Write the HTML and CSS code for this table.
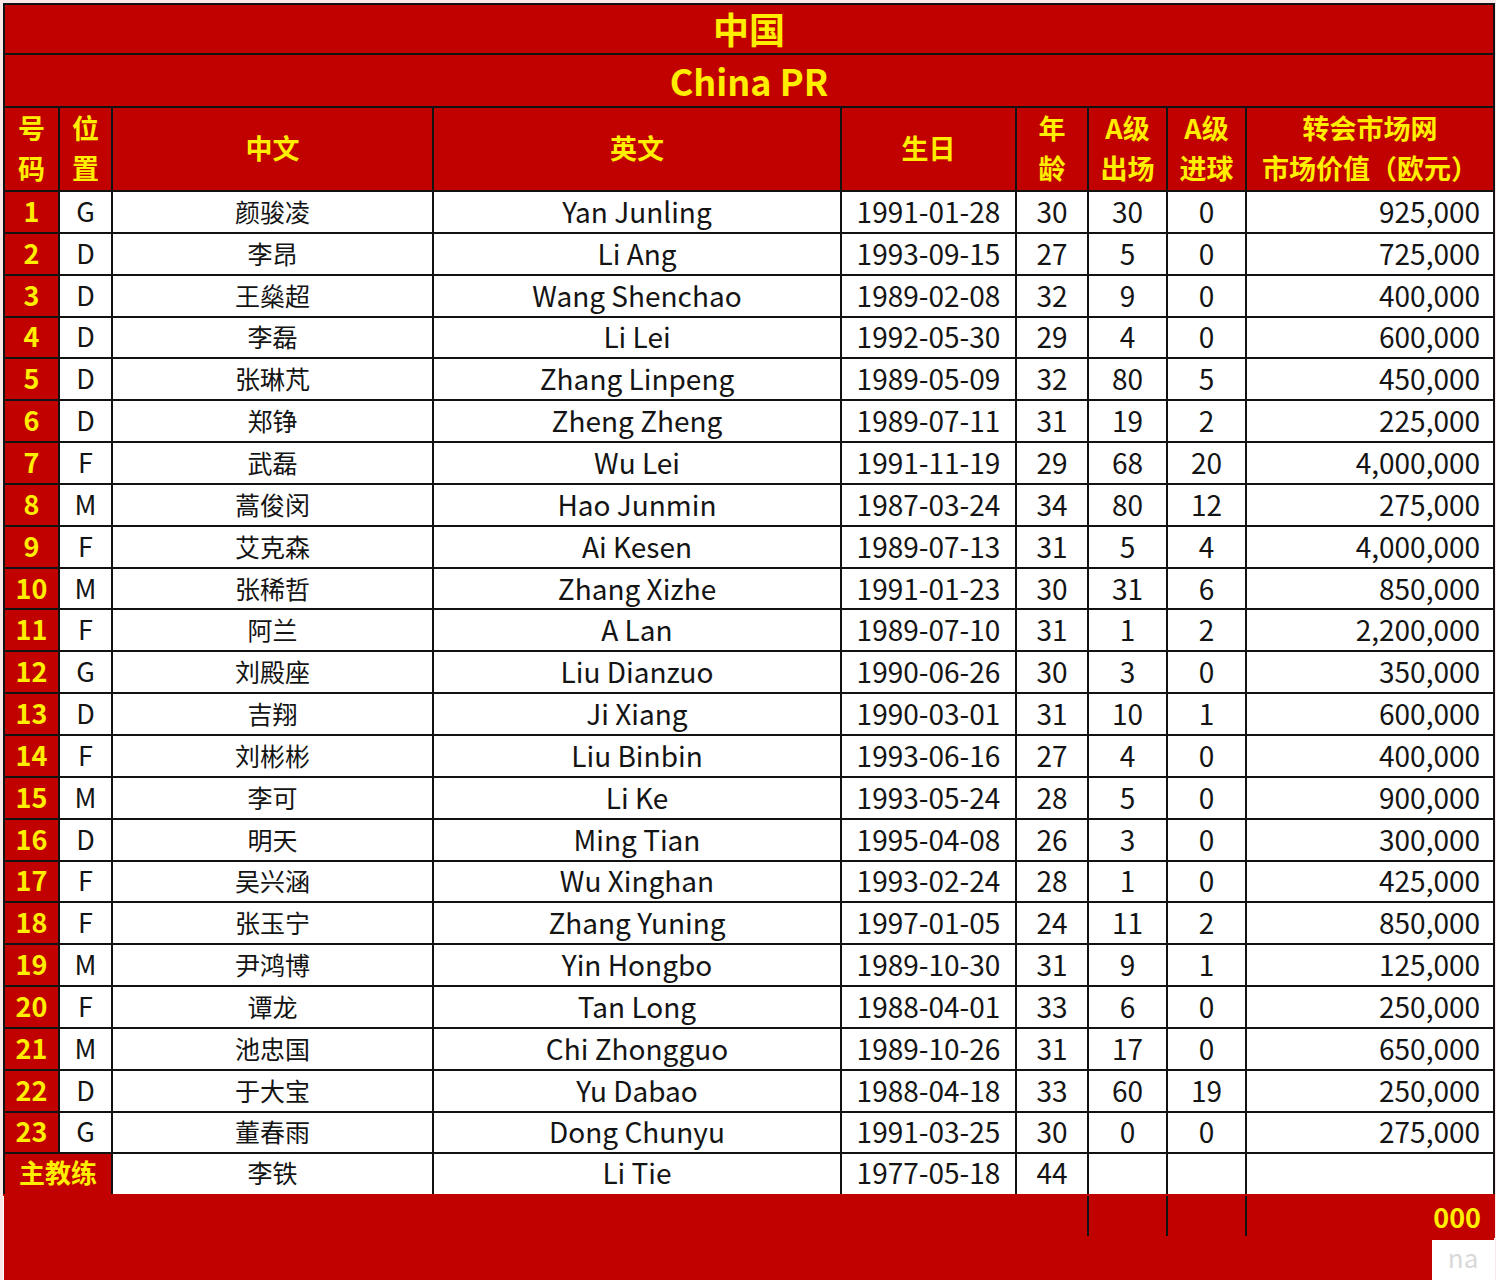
FILE: index.html
```html
<!DOCTYPE html>
<html lang="zh">
<head>
<meta charset="utf-8">
<title>中国 China PR</title>
<link rel="stylesheet" href="styles.css">
</head>
<body>
<table class="sheet">
<colgroup>
<col class="c-no"><col class="c-pos"><col class="c-cn"><col class="c-en"><col class="c-dob"><col class="c-age"><col class="c-caps"><col class="c-goals"><col class="c-val">
</colgroup>
<tr class="title t1"><td colspan="9">中国</td></tr>
<tr class="title t2"><td colspan="9">China PR</td></tr>
<tr class="head">
<td>号<br>码</td><td>位<br>置</td><td>中文</td><td>英文</td><td>生日</td><td>年<br>龄</td><td>A级<br>出场</td><td>A级<br>进球</td><td>转会市场网<br>市场价值（欧元）</td>
</tr>
<tr class="row"><td class="no">1</td><td class="pos">G</td><td class="cn">颜骏凌</td><td class="en">Yan Junling</td><td class="num">1991-01-28</td><td class="num">30</td><td class="num">30</td><td class="num">0</td><td class="val">925,000</td></tr>
<tr class="row"><td class="no">2</td><td class="pos">D</td><td class="cn">李昂</td><td class="en">Li Ang</td><td class="num">1993-09-15</td><td class="num">27</td><td class="num">5</td><td class="num">0</td><td class="val">725,000</td></tr>
<tr class="row"><td class="no">3</td><td class="pos">D</td><td class="cn">王燊超</td><td class="en">Wang Shenchao</td><td class="num">1989-02-08</td><td class="num">32</td><td class="num">9</td><td class="num">0</td><td class="val">400,000</td></tr>
<tr class="row"><td class="no">4</td><td class="pos">D</td><td class="cn">李磊</td><td class="en">Li Lei</td><td class="num">1992-05-30</td><td class="num">29</td><td class="num">4</td><td class="num">0</td><td class="val">600,000</td></tr>
<tr class="row"><td class="no">5</td><td class="pos">D</td><td class="cn">张琳芃</td><td class="en">Zhang Linpeng</td><td class="num">1989-05-09</td><td class="num">32</td><td class="num">80</td><td class="num">5</td><td class="val">450,000</td></tr>
<tr class="row"><td class="no">6</td><td class="pos">D</td><td class="cn">郑铮</td><td class="en">Zheng Zheng</td><td class="num">1989-07-11</td><td class="num">31</td><td class="num">19</td><td class="num">2</td><td class="val">225,000</td></tr>
<tr class="row"><td class="no">7</td><td class="pos">F</td><td class="cn">武磊</td><td class="en">Wu Lei</td><td class="num">1991-11-19</td><td class="num">29</td><td class="num">68</td><td class="num">20</td><td class="val">4,000,000</td></tr>
<tr class="row"><td class="no">8</td><td class="pos">M</td><td class="cn">蒿俊闵</td><td class="en">Hao Junmin</td><td class="num">1987-03-24</td><td class="num">34</td><td class="num">80</td><td class="num">12</td><td class="val">275,000</td></tr>
<tr class="row"><td class="no">9</td><td class="pos">F</td><td class="cn">艾克森</td><td class="en">Ai Kesen</td><td class="num">1989-07-13</td><td class="num">31</td><td class="num">5</td><td class="num">4</td><td class="val">4,000,000</td></tr>
<tr class="row"><td class="no">10</td><td class="pos">M</td><td class="cn">张稀哲</td><td class="en">Zhang Xizhe</td><td class="num">1991-01-23</td><td class="num">30</td><td class="num">31</td><td class="num">6</td><td class="val">850,000</td></tr>
<tr class="row"><td class="no">11</td><td class="pos">F</td><td class="cn">阿兰</td><td class="en">A Lan</td><td class="num">1989-07-10</td><td class="num">31</td><td class="num">1</td><td class="num">2</td><td class="val">2,200,000</td></tr>
<tr class="row"><td class="no">12</td><td class="pos">G</td><td class="cn">刘殿座</td><td class="en">Liu Dianzuo</td><td class="num">1990-06-26</td><td class="num">30</td><td class="num">3</td><td class="num">0</td><td class="val">350,000</td></tr>
<tr class="row"><td class="no">13</td><td class="pos">D</td><td class="cn">吉翔</td><td class="en">Ji Xiang</td><td class="num">1990-03-01</td><td class="num">31</td><td class="num">10</td><td class="num">1</td><td class="val">600,000</td></tr>
<tr class="row"><td class="no">14</td><td class="pos">F</td><td class="cn">刘彬彬</td><td class="en">Liu Binbin</td><td class="num">1993-06-16</td><td class="num">27</td><td class="num">4</td><td class="num">0</td><td class="val">400,000</td></tr>
<tr class="row"><td class="no">15</td><td class="pos">M</td><td class="cn">李可</td><td class="en">Li Ke</td><td class="num">1993-05-24</td><td class="num">28</td><td class="num">5</td><td class="num">0</td><td class="val">900,000</td></tr>
<tr class="row"><td class="no">16</td><td class="pos">D</td><td class="cn">明天</td><td class="en">Ming Tian</td><td class="num">1995-04-08</td><td class="num">26</td><td class="num">3</td><td class="num">0</td><td class="val">300,000</td></tr>
<tr class="row"><td class="no">17</td><td class="pos">F</td><td class="cn">吴兴涵</td><td class="en">Wu Xinghan</td><td class="num">1993-02-24</td><td class="num">28</td><td class="num">1</td><td class="num">0</td><td class="val">425,000</td></tr>
<tr class="row"><td class="no">18</td><td class="pos">F</td><td class="cn">张玉宁</td><td class="en">Zhang Yuning</td><td class="num">1997-01-05</td><td class="num">24</td><td class="num">11</td><td class="num">2</td><td class="val">850,000</td></tr>
<tr class="row"><td class="no">19</td><td class="pos">M</td><td class="cn">尹鸿博</td><td class="en">Yin Hongbo</td><td class="num">1989-10-30</td><td class="num">31</td><td class="num">9</td><td class="num">1</td><td class="val">125,000</td></tr>
<tr class="row"><td class="no">20</td><td class="pos">F</td><td class="cn">谭龙</td><td class="en">Tan Long</td><td class="num">1988-04-01</td><td class="num">33</td><td class="num">6</td><td class="num">0</td><td class="val">250,000</td></tr>
<tr class="row"><td class="no">21</td><td class="pos">M</td><td class="cn">池忠国</td><td class="en">Chi Zhongguo</td><td class="num">1989-10-26</td><td class="num">31</td><td class="num">17</td><td class="num">0</td><td class="val">650,000</td></tr>
<tr class="row"><td class="no">22</td><td class="pos">D</td><td class="cn">于大宝</td><td class="en">Yu Dabao</td><td class="num">1988-04-18</td><td class="num">33</td><td class="num">60</td><td class="num">19</td><td class="val">250,000</td></tr>
<tr class="row"><td class="no">23</td><td class="pos">G</td><td class="cn">董春雨</td><td class="en">Dong Chunyu</td><td class="num">1991-03-25</td><td class="num">30</td><td class="num">0</td><td class="num">0</td><td class="val">275,000</td></tr>
<tr class="row coach"><td class="no coachlabel" colspan="2">主教练</td><td class="cn">李铁</td><td class="en">Li Tie</td><td class="num">1977-05-18</td><td class="num">44</td><td class="num"></td><td class="num"></td><td class="val"></td></tr>
<tr class="total"><td colspan="6" class="blank"></td><td class="line"></td><td class="line"></td><td class="line sum">000</td></tr>
<tr class="last"><td colspan="8" class="blank"></td><td class="tail"><span class="mark">na</span></td></tr>
</table>
</body>
</html>
```
FILE: styles.css
```css
html, body {
  margin: 0;
  background: #fbe9e9;
}
body {
  padding: 3px 3px 0 3px;
  height: 1277px;
  overflow: hidden;
}
.sheet {
  border-collapse: collapse;
  table-layout: fixed;
  width: 1490px;
  font-family: "Noto Sans CJK SC", "Noto Sans", sans-serif;
  color: #141414;
  background: #fff;
}
.c-no { width: 55px; }
.c-pos { width: 53px; }
.c-cn { width: 321px; }
.c-en { width: 408px; }
.c-dob { width: 175px; }
.c-age { width: 72px; }
.c-caps { width: 79px; }
.c-goals { width: 79px; }
.c-val { width: 248px; }

.sheet td {
  border: 2px solid #121212;
  padding: 0;
  text-align: center;
  vertical-align: middle;
  white-space: nowrap;
}
.title td {
  background: #c10000;
  color: #ffee00;
  font-weight: 700;
  font-size: 36px;
  line-height: 44px;
}
.t1 td { height: 46px; padding-bottom: 2px; }
.t2 td { height: 49px; padding-bottom: 2px; }

.head td {
  background: #c10000;
  color: #ffee00;
  font-weight: 700;
  font-size: 27px;
  line-height: 40px;
  height: 79px;
  padding-bottom: 2px;
}
.row td {
  height: 37.85px;
  line-height: 36px;
  padding-bottom: 2px;
}
.row .no {
  background: #c10000;
  color: #ffee00;
  font-weight: 700;
  font-size: 27px;
}
.row .pos { font-size: 27px; }
.row .cn { font-size: 25px; }
.row .en { font-size: 28px; }
.row .num { font-size: 28px; }
.row .val {
  font-size: 28px;
  text-align: right;
  padding-right: 13px;
}
.coach td {
  border-bottom-color: #c10000;
  vertical-align: top;
  line-height: 36px;
}
.coach .coachlabel {
  font-size: 26px;
  text-align: center;
}
.total td, .last td {
  background: #c10000;
  border-top-color: #c10000;
  border-bottom-color: #c10000;
  border-left: none;
  border-right: none;
}
.total td { height: 40px; }
.total .line { border-left: 2px solid #121212; }
.total .sum {
  color: #ffee00;
  font-weight: 700;
  font-size: 27px;
  text-align: right;
  padding-right: 12px;
  border-right: 2px solid #c10000;
}
.last td {
  height: 42px;
  text-align: right;
  vertical-align: bottom;
}
.tail { padding: 0; }
.mark {
  display: inline-block;
  width: 62px;
  height: 40px;
  background: #fff;
  color: #d8d8d8;
  font-size: 26px;
  line-height: 34px;
  text-align: center;
}
```
